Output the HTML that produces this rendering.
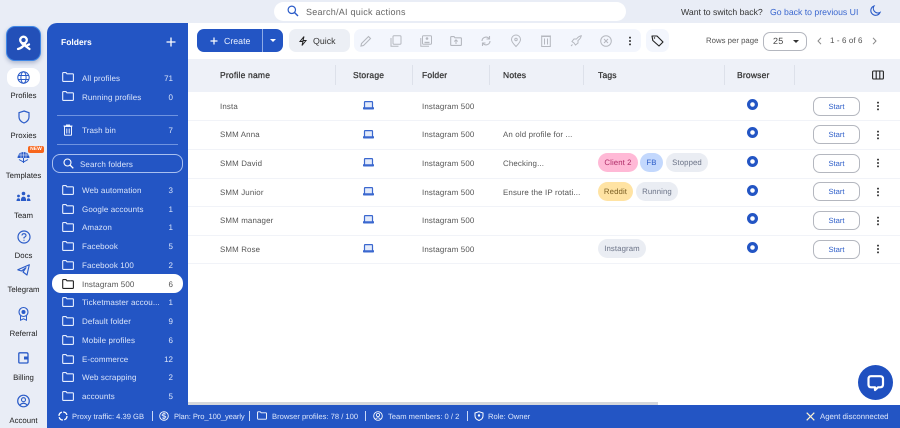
<!DOCTYPE html>
<html><head><meta charset="utf-8"><style>
*{box-sizing:border-box}
html,body{margin:0;padding:0}
body{width:900px;height:428px;overflow:hidden;background:#e9edf6;font-family:"Liberation Sans",sans-serif;position:relative;font-size:8px;color:#444;text-rendering:geometricPrecision;filter:blur(.25px)}
.a{position:absolute;white-space:nowrap}
svg{position:absolute;overflow:visible;fill:none}
.nl{position:absolute;left:0;width:47px;text-align:center;font-size:7.8px;color:#222;line-height:10px;margin-top:1px}
.f{position:absolute;left:82px;color:#dbe5fa;font-size:8px;line-height:10px;letter-spacing:.1px;white-space:nowrap;margin-top:1px}
.c{position:absolute;right:727px;color:#dbe5fa;font-size:8px;line-height:10px;margin-top:1px}
.hd{position:absolute;top:69px;font-size:8.5px;line-height:12px;color:#333;letter-spacing:.2px;-webkit-text-stroke:.25px #333}
.dv{position:absolute;top:65px;width:1px;height:20px;background:#dde1ea}
.rl{position:absolute;left:188px;right:0;height:1px;background:#f1f3f8}
.t{position:absolute;font-size:7.9px;line-height:10px;color:#555;letter-spacing:.15px;white-space:nowrap}
.st{position:absolute;left:813px;width:47px;height:19px;border:1px solid #b4b7bf;border-radius:7px;background:#fff;color:#2f5fc9;font-size:7.6px;line-height:18px;text-align:center}
.tag{position:absolute;height:19px;border-radius:10px;font-size:7.8px;line-height:19px;text-align:center;letter-spacing:.1px}
.dots{position:absolute;left:877px;width:2px;height:2px;background:#333;box-shadow:0 -3.4px 0 #333,0 3.4px 0 #333;border-radius:1px}
.sb{position:absolute;top:411px;color:#dce6fb;font-size:7.6px;line-height:11px;white-space:nowrap}
.sp{position:absolute;top:411px;width:1px;height:10px;background:#c9d8f7}
</style></head><body>
<svg width="0" height="0" style="position:absolute"><defs>
<symbol id="fo" viewBox="0 0 12 10"><path d="M.7 2V1.200Q.7.600 1.300.600H4L5 1.800H10.700Q11.400 1.800 11.400 2.500V8.600Q11.400 9.400 10.600 9.400H1.400Q.7 9.400.7 8.600Z" fill="none" stroke="currentColor" stroke-width="1.100"/></symbol>
<symbol id="lap" viewBox="0 0 11 9"><path d="M1.500 6.500V1.200Q1.500.600 2.100.600H8.900Q9.500.600 9.500 1.200V6.500" fill="#e4ebfa" stroke="#3b68cf" stroke-width="1.200"/><path d="M0 6.300H11V7.600Q11 8.500 10.300 8.500H.7Q0 8.500 0 7.600Z" fill="#3b68cf"/></symbol>
<symbol id="chr" viewBox="0 0 11 11"><circle cx="5.500" cy="5.500" r="3.900" fill="none" stroke="#2355c4" stroke-width="3.200"/></symbol>
</defs></svg>

<!-- top -->
<div class="a" style="left:274px;top:2px;width:352px;height:19px;background:#fff;border-radius:10px"></div>
<svg style="left:287px;top:5px" width="12" height="12" viewBox="0 0 12 12"><circle cx="4.800" cy="4.800" r="3.700" stroke="#2a5bc8" stroke-width="1.200"/><path d="M7.500 7.500L11 11" stroke="#2a5bc8" stroke-width="1.400"/></svg>
<div class="a" style="left:306px;top:7px;font-size:9px;line-height:11px;color:#666;letter-spacing:.25px">Search/AI quick actions</div>
<div class="a" style="left:681px;top:6px;font-size:8.700px;line-height:12px;color:#333">Want to switch back?</div>
<div class="a" style="left:770px;top:6px;font-size:8.700px;line-height:12px;color:#3a67cf">Go back to previous UI</div>
<svg style="left:869px;top:5px" width="12" height="12" viewBox="0 0 12 12"><path d="M5 1A4.800 4.800 0 1 0 11 7.500 4.600 4.600 0 0 1 5 1Z" stroke="#2a5bc8" stroke-width="1.100"/></svg>

<!-- nav -->
<div class="a" style="left:6px;top:26px;width:35px;height:35px;border-radius:9px;background:#2350b8;border:1px solid #3f87e6;box-shadow:0 2px 4px rgba(30,50,110,.3)"></div>
<svg style="left:15px;top:34px" width="18" height="18" viewBox="0 0 18 18"><circle cx="8.500" cy="6" r="3.300" stroke="#fff" stroke-width="2.300"/><path d="M7 9.500L14.500 15M10 10Q7 14 3 15M11 12L14 10.500" stroke="#fff" stroke-width="2.300" stroke-linecap="round"/></svg>
<div class="a" style="left:7px;top:68px;width:33px;height:19px;background:#fff;border-radius:8px"></div>
<svg style="left:17px;top:71px" width="13" height="13" viewBox="0 0 13 13"><g stroke="#2a5bc8" stroke-width="1"><circle cx="6.500" cy="6.500" r="5.700"/><ellipse cx="6.500" cy="6.500" rx="2.600" ry="5.700"/><path d="M1 4.500H12M1 8.500H12"/></g></svg>
<div class="nl" style="top:90px">Profiles</div>
<svg style="left:18px;top:110px" width="12" height="14" viewBox="0 0 12 14"><path d="M6 1L11 2.700V7Q11 11 6 13 1 11 1 7V2.700Z" stroke="#2a5bc8" stroke-width="1.200"/></svg>
<div class="nl" style="top:130px">Proxies</div>
<svg style="left:17px;top:151px" width="13" height="13" viewBox="0 0 13 13"><path d="M.5 7Q1 1.200 6.500 1 12 1.200 12.500 7Z" fill="#2a5bc8"/><path d="M4 1.500V7M9 1.500V7M6.500 1V7M1 4H12" stroke="#fff" stroke-width=".5"/><path d="M2 8.500L6.500 11 11 8.500M6.500 7V12" stroke="#2a5bc8"/></svg>
<div class="a" style="left:28px;top:146px;width:16px;height:7px;background:#f7661d;border-radius:2px;color:#fff;font-size:5px;line-height:7px;font-weight:700;text-align:center">NEW</div>
<div class="nl" style="top:170px">Templates</div>
<svg style="left:16px;top:191px" width="15" height="12" viewBox="0 0 15 12"><g fill="#2a5bc8"><circle cx="7.500" cy="2.500" r="1.800"/><circle cx="2.500" cy="5" r="1.400"/><circle cx="12.500" cy="5" r="1.400"/><path d="M4.800 10Q4.800 5.600 7.500 5.600T10.200 10ZM.5 10Q.5 7.200 2.500 7.200T4 10ZM11 10Q10.500 7.200 12.500 7.200T14.500 10Z"/></g></svg>
<div class="nl" style="top:210px">Team</div>
<svg style="left:17px;top:230px" width="14" height="14" viewBox="0 0 14 14"><circle cx="7" cy="7" r="6" stroke="#2a5bc8" stroke-width="1.200"/><path d="M5 5.500Q5 3.700 7 3.700T9 5.500Q9 6.500 7 7.500V8.500M7 9.700V10.700" stroke="#2a5bc8" stroke-width="1.100"/></svg>
<div class="nl" style="top:250px">Docs</div>
<svg style="left:17px;top:264px" width="13" height="12" viewBox="0 0 13 12"><path d="M12.300 .7L.8 5.800 4.500 7 9 3.700 6 8 10 11Z" stroke="#2a5bc8" stroke-width="1.100" stroke-linejoin="round"/></svg>
<div class="nl" style="top:284px">Telegram</div>
<svg style="left:18px;top:307px" width="11" height="14" viewBox="0 0 11 14"><circle cx="5.500" cy="5" r="4.500" stroke="#2a5bc8" stroke-width="1.100"/><circle cx="5.500" cy="5" r="2" fill="#2a5bc8"/><path d="M2.500 9V13.200L5.500 11.800 8.500 13.200V9" stroke="#2a5bc8"/></svg>
<div class="nl" style="top:328px">Referral</div>
<svg style="left:18px;top:352px" width="11" height="12" viewBox="0 0 11 12"><path d="M1.800.8H8.500Q10 .8 10 2.300V10Q10 11 9 11H1.800Q.8 11 .8 10V1.800Q.8.800 1.800.800Z" stroke="#2a5bc8" stroke-width="1.300"/><rect x="6" y="4.500" width="4" height="3" fill="#2a5bc8"/></svg>
<div class="nl" style="top:372px">Billing</div>
<svg style="left:17px;top:394px" width="13" height="14" viewBox="0 0 13 14"><circle cx="6.500" cy="7" r="5.800" stroke="#2a5bc8" stroke-width="1.200"/><circle cx="6.500" cy="5.700" r="2" stroke="#2a5bc8" stroke-width="1.100"/><path d="M2.800 11Q6.500 7.500 10.200 11" stroke="#2a5bc8" stroke-width="1.100"/></svg>
<div class="nl" style="top:415px">Account</div>

<!-- folder panel -->
<div class="a" style="left:47px;top:23px;width:853px;height:405px;background:#2355c4;border-radius:10px 0 0 0"></div>
<div class="a" style="left:188px;top:23px;width:712px;height:382px;background:#fff"></div>
<div class="a" style="left:61px;top:37px;color:#fff;font-size:8.500px;line-height:11px;font-weight:700">Folders</div>
<svg style="left:166px;top:37px" width="10" height="10" viewBox="0 0 10 10"><path d="M5 .5V9.500M.5 5H9.500" stroke="#fff" stroke-width="1.300"/></svg>

<svg style="left:62px;top:72px;color:#e6eeff" width="12" height="10"><use href="#fo"/></svg><div class="f" style="top:73px">All profiles</div><div class="c" style="top:73px">71</div>
<svg style="left:62px;top:91px;color:#e6eeff" width="12" height="10"><use href="#fo"/></svg><div class="f" style="top:92px">Running profiles</div><div class="c" style="top:92px">0</div>
<div class="a" style="left:57px;top:115px;width:121px;height:1px;background:#6f93e0"></div>
<svg style="left:63px;top:124px" width="10" height="12" viewBox="0 0 10 12"><path d="M1.500 2.500V10.500Q1.500 11.300 2.300 11.300H7.700Q8.500 11.300 8.500 10.500V2.500ZM.5 2H9.500M3 1H7M3.800 4.500V9.500M6.200 4.500V9.500" stroke="#eef3ff" stroke-width="1"/></svg>
<div class="f" style="top:125px">Trash bin</div><div class="c" style="top:125px">7</div>
<div class="a" style="left:57px;top:144px;width:121px;height:1px;background:#6f93e0"></div>
<div class="a" style="left:52px;top:154px;width:131px;height:19px;border:1px solid #a9c0f0;border-radius:8px"></div>
<svg style="left:63px;top:158px" width="11" height="11" viewBox="0 0 11 11"><circle cx="4.500" cy="4.500" r="3.500" stroke="#fff" stroke-width="1.100"/><path d="M7 7L10.300 10.300" stroke="#fff" stroke-width="1.300"/></svg>
<div class="f" style="left:80px;top:159px">Search folders</div>

<svg style="left:62px;top:185px;color:#e6eeff" width="12" height="10"><use href="#fo"/></svg><div class="f" style="top:185px">Web automation</div><div class="c" style="top:185px">3</div>
<svg style="left:62px;top:204px;color:#e6eeff" width="12" height="10"><use href="#fo"/></svg><div class="f" style="top:204px">Google accounts</div><div class="c" style="top:204px">1</div>
<svg style="left:62px;top:222px;color:#e6eeff" width="12" height="10"><use href="#fo"/></svg><div class="f" style="top:222px">Amazon</div><div class="c" style="top:222px">1</div>
<svg style="left:62px;top:241px;color:#e6eeff" width="12" height="10"><use href="#fo"/></svg><div class="f" style="top:241px">Facebook</div><div class="c" style="top:241px">5</div>
<svg style="left:62px;top:260px;color:#e6eeff" width="12" height="10"><use href="#fo"/></svg><div class="f" style="top:260px">Facebook 100</div><div class="c" style="top:260px">2</div>
<div class="a" style="left:52px;top:274px;width:131px;height:19px;background:#fff;border-radius:9px"></div>
<svg style="left:62px;top:279px;color:#222" width="12" height="10"><use href="#fo"/></svg><div class="f" style="top:279px;color:#555">Instagram 500</div><div class="c" style="top:279px;color:#555">6</div>
<svg style="left:62px;top:297px;color:#e6eeff" width="12" height="10"><use href="#fo"/></svg><div class="f" style="top:297px">Ticketmaster accou...</div><div class="c" style="top:297px">1</div>
<svg style="left:62px;top:316px;color:#e6eeff" width="12" height="10"><use href="#fo"/></svg><div class="f" style="top:316px">Default folder</div><div class="c" style="top:316px">9</div>
<svg style="left:62px;top:335px;color:#e6eeff" width="12" height="10"><use href="#fo"/></svg><div class="f" style="top:335px">Mobile profiles</div><div class="c" style="top:335px">6</div>
<svg style="left:62px;top:354px;color:#e6eeff" width="12" height="10"><use href="#fo"/></svg><div class="f" style="top:354px">E-commerce</div><div class="c" style="top:354px">12</div>
<svg style="left:62px;top:372px;color:#e6eeff" width="12" height="10"><use href="#fo"/></svg><div class="f" style="top:372px">Web scrapping</div><div class="c" style="top:372px">2</div>
<svg style="left:62px;top:391px;color:#e6eeff" width="12" height="10"><use href="#fo"/></svg><div class="f" style="top:391px">accounts</div><div class="c" style="top:391px">5</div>

<!-- toolbar -->
<div class="a" style="left:197px;top:29px;width:86px;height:23px;background:#2355c4;border-radius:7px"></div>
<div class="a" style="left:262px;top:29px;width:1px;height:23px;background:#8fabe6"></div>
<svg style="left:210px;top:37px" width="8" height="8" viewBox="0 0 8 8"><path d="M4 .5V7.500M.5 4H7.500" stroke="#fff" stroke-width="1.200"/></svg>
<div class="a" style="left:224px;top:36px;color:#eaf0ff;font-size:8.800px;line-height:11px">Create</div>
<svg style="left:270px;top:39px" width="6" height="3" viewBox="0 0 6 3"><path d="M0 0H6L3 3Z" fill="#fff"/></svg>
<div class="a" style="left:289px;top:29px;width:61px;height:23px;background:#eceff5;border-radius:7px"></div>
<svg style="left:299px;top:36px" width="8" height="10" viewBox="0 0 8 10"><path d="M5 .5L1 5.500H4L3 9.500 7 4.500H4Z" stroke="#222"/></svg>
<div class="a" style="left:313px;top:36px;color:#333;font-size:8.800px;line-height:11px">Quick</div>
<div class="a" style="left:354px;top:29px;width:287px;height:23px;background:#f3f6fd;border-radius:7px"></div>
<svg style="left:360px;top:35px" width="12" height="12" viewBox="0 0 12 12"><path d="M1 11L1.500 8.500 8.500 1.500 10.500 3.500 3.500 10.500Z" stroke="#b5b8bf" stroke-width="1.100"/></svg>
<svg style="left:390px;top:35px" width="12" height="12" viewBox="0 0 12 12"><rect x="3" y=".7" width="8" height="8.500" rx="1" stroke="#b5b8bf"/><path d="M1 3V11.300H8.500" stroke="#b5b8bf"/></svg>
<svg style="left:420px;top:35px" width="12" height="12" viewBox="0 0 12 12"><rect x="2.500" y=".7" width="9" height="8.500" rx="1" stroke="#b5b8bf"/><path d="M.8 3V11.300H9" stroke="#b5b8bf"/><circle cx="7" cy="3.500" r="1.300" fill="#b5b8bf"/><path d="M4.500 7.500H9.500" stroke="#b5b8bf" stroke-width="1.400"/></svg>
<svg style="left:450px;top:36px;color:#b5b8bf" width="12" height="10"><use href="#fo"/><path d="M6 8V4M4.300 5.500L6 3.800 7.700 5.500" stroke="#b5b8bf"/></svg>
<svg style="left:480px;top:35px" width="12" height="12" viewBox="0 0 12 12"><path d="M2 6A4 4 0 0 1 9 3.500M10 6A4 4 0 0 1 3 8.500M9.500 1V4H6.500M2.500 11V8H5.500" stroke="#b5b8bf" stroke-width="1.100"/></svg>
<svg style="left:511px;top:35px" width="10" height="12" viewBox="0 0 10 12"><path d="M5 11.500Q.5 7 .5 4.500A4.500 4.500 0 0 1 9.500 4.500Q9.500 7 5 11.500Z" stroke="#b5b8bf"/><circle cx="5" cy="4.500" r="1.200" stroke="#b5b8bf"/></svg>
<svg style="left:541px;top:35px" width="10" height="12" viewBox="0 0 10 12"><rect x=".7" y="1.500" width="8.600" height="10" stroke="#b5b8bf"/><path d="M0 1H10M3.500 3.500V9.500M6.500 3.500V9.500" stroke="#b5b8bf"/></svg>
<svg style="left:570px;top:35px" width="12" height="12" viewBox="0 0 12 12"><path d="M4 8L2 6.500 4 4H6.500Q8.500 1.200 11.300.7 10.800 3.500 8 5.500V8L5.500 10ZM2.500 9.500L1 11" stroke="#b5b8bf"/></svg>
<svg style="left:600px;top:35px" width="12" height="12" viewBox="0 0 12 12"><circle cx="6" cy="6" r="5.300" stroke="#b5b8bf"/><path d="M4 4L8 8M8 4L4 8" stroke="#b5b8bf"/></svg>
<div class="dots" style="left:629px;top:40px"></div>
<div class="a" style="left:646px;top:29px;width:23px;height:23px;background:#f3f6fd;border-radius:7px"></div>
<svg style="left:651px;top:35px" width="13" height="12" viewBox="0 0 13 12"><path d="M1 1H6L12 7 8 11 1.800 5.500Z" stroke="#222" stroke-width="1.100" stroke-linejoin="round"/><circle cx="3.500" cy="3" r=".7" fill="#222"/></svg>
<div class="a" style="left:706px;top:36px;font-size:7.800px;line-height:10px;color:#555">Rows per page</div>
<div class="a" style="left:763px;top:32px;width:44px;height:19px;border:1px solid #b4b7bf;border-radius:7px"></div>
<div class="a" style="left:773px;top:35px;font-size:9px;line-height:12px;color:#444;letter-spacing:.3px">25</div>
<svg style="left:793px;top:40px" width="6" height="3" viewBox="0 0 6 3"><path d="M0 0H6L3 3Z" fill="#333"/></svg>
<svg style="left:817px;top:37px" width="5" height="8" viewBox="0 0 5 8"><path d="M4 .8L1 4 4 7.200" stroke="#888"/></svg>
<div class="a" style="left:830px;top:36px;font-size:8px;line-height:10px;color:#555;letter-spacing:.1px">1 - 6 of 6</div>
<svg style="left:872px;top:37px" width="5" height="8" viewBox="0 0 5 8"><path d="M1 .8L4 4 1 7.200" stroke="#888"/></svg>

<!-- table head -->
<div class="a" style="left:188px;top:59px;width:712px;height:33px;background:#eef1f8"></div>
<div class="hd" style="left:220px">Profile name</div>
<div class="hd" style="left:353px">Storage</div>
<div class="hd" style="left:422px">Folder</div>
<div class="hd" style="left:503px">Notes</div>
<div class="hd" style="left:598px">Tags</div>
<div class="hd" style="left:737px">Browser</div>
<div class="dv" style="left:335px"></div><div class="dv" style="left:412px"></div><div class="dv" style="left:489px"></div><div class="dv" style="left:583px"></div><div class="dv" style="left:724px"></div><div class="dv" style="left:794px"></div>
<svg style="left:872px;top:70px" width="12" height="10" viewBox="0 0 12 10"><rect x=".6" y="1" width="10.800" height="8" rx="1" stroke="#222" stroke-width="1.100"/><path d="M4.200 1V9M7.800 1V9" stroke="#222" stroke-width="1.100"/></svg>

<!-- rows -->
<div class="rl" style="top:120px"></div><div class="rl" style="top:149px"></div><div class="rl" style="top:178px"></div><div class="rl" style="top:206px"></div><div class="rl" style="top:235px"></div><div class="rl" style="top:263px"></div>

<div class="t" style="left:220px;top:102px">Insta</div><svg style="left:363px;top:101px" width="11" height="9"><use href="#lap"/></svg><div class="t" style="left:422px;top:102px">Instagram 500</div><svg style="left:747px;top:99px" width="11" height="11"><use href="#chr"/></svg><div class="st" style="top:97px">Start</div><div class="dots" style="top:105px"></div>

<div class="t" style="left:220px;top:130px">SMM Anna</div><svg style="left:363px;top:130px" width="11" height="9"><use href="#lap"/></svg><div class="t" style="left:422px;top:130px">Instagram 500</div><div class="t" style="left:503px;top:130px">An old profile for ...</div><svg style="left:747px;top:127px" width="11" height="11"><use href="#chr"/></svg><div class="st" style="top:125px">Start</div><div class="dots" style="top:134px"></div>

<div class="t" style="left:220px;top:159px">SMM David</div><svg style="left:363px;top:158px" width="11" height="9"><use href="#lap"/></svg><div class="t" style="left:422px;top:159px">Instagram 500</div><div class="t" style="left:503px;top:159px">Checking...</div>
<div class="tag" style="left:598px;top:153px;width:40px;background:#ffb9d6;color:#b02c68">Client 2</div><div class="tag" style="left:640px;top:153px;width:23px;background:#c3d8fd;color:#2f5fc9">FB</div><div class="tag" style="left:666px;top:153px;width:42px;background:#eaedf3;color:#6c7488">Stopped</div>
<svg style="left:747px;top:156px" width="11" height="11"><use href="#chr"/></svg><div class="st" style="top:154px">Start</div><div class="dots" style="top:162px"></div>

<div class="t" style="left:220px;top:188px">SMM Junior</div><svg style="left:363px;top:187px" width="11" height="9"><use href="#lap"/></svg><div class="t" style="left:422px;top:188px">Instagram 500</div><div class="t" style="left:503px;top:188px">Ensure the IP rotati...</div>
<div class="tag" style="left:598px;top:182px;width:35px;background:#ffe3a3;color:#7d6125">Reddit</div><div class="tag" style="left:636px;top:182px;width:42px;background:#eaedf3;color:#6c7488">Running</div>
<svg style="left:747px;top:185px" width="11" height="11"><use href="#chr"/></svg><div class="st" style="top:182px">Start</div><div class="dots" style="top:191px"></div>

<div class="t" style="left:220px;top:216px">SMM manager</div><svg style="left:363px;top:215px" width="11" height="9"><use href="#lap"/></svg><div class="t" style="left:422px;top:216px">Instagram 500</div><svg style="left:747px;top:213px" width="11" height="11"><use href="#chr"/></svg><div class="st" style="top:211px">Start</div><div class="dots" style="top:220px"></div>

<div class="t" style="left:220px;top:245px">SMM Rose</div><svg style="left:363px;top:244px" width="11" height="9"><use href="#lap"/></svg><div class="t" style="left:422px;top:245px">Instagram 500</div>
<div class="tag" style="left:598px;top:239px;width:48px;background:#eaedf3;color:#6c7488">Instagram</div>
<svg style="left:747px;top:242px" width="11" height="11"><use href="#chr"/></svg><div class="st" style="top:240px">Start</div><div class="dots" style="top:248px"></div>

<!-- scrollbar -->
<div class="a" style="left:188px;top:402px;width:470px;height:3px;background:#d5d7db"></div>

<!-- chat -->
<div class="a" style="left:858px;top:365px;width:35px;height:35px;border-radius:50%;background:#1f50c0"></div>
<svg style="left:867px;top:375px" width="18" height="17" viewBox="0 0 18 17"><path d="M4 1.200H13Q16 1.200 16 4V9.500Q16 12.300 13 12.300H11L8 15V12.300H4Q1.500 12.300 1.500 9.500V4Q1.500 1.200 4 1.200Z" stroke="#fff" stroke-width="2.200" stroke-linejoin="round"/></svg>

<!-- status -->
<svg style="left:58px;top:411px" width="10" height="10" viewBox="0 0 10 10"><circle cx="5" cy="5" r="4" stroke="#fff" stroke-width="1.300" stroke-dasharray="5 1.300"/></svg>
<div class="sb" style="left:72px">Proxy traffic: 4.39 GB</div><div class="sp" style="left:152px"></div>
<svg style="left:159px;top:411px" width="10" height="10" viewBox="0 0 10 10"><circle cx="5" cy="5" r="4.300" stroke="#fff" stroke-width=".9"/><path d="M6.800 3.300Q5 2 3.500 3.300T5 5 6.500 6.800 3.200 6.700M5 1.500V8.500" stroke="#fff" stroke-width=".7"/></svg>
<div class="sb" style="left:174px;letter-spacing:-.1px">Plan: Pro_100_yearly</div><div class="sp" style="left:249px"></div>
<svg style="left:257px;top:411px;color:#fff" width="10" height="9"><use href="#fo"/></svg>
<div class="sb" style="left:272px">Browser profiles: 78 / 100</div><div class="sp" style="left:365px"></div>
<svg style="left:373px;top:411px" width="10" height="10" viewBox="0 0 10 10"><circle cx="5" cy="5" r="4.300" stroke="#fff" stroke-width=".9"/><circle cx="5" cy="4" r="1.600" stroke="#fff" stroke-width=".8"/><path d="M2.500 8Q5 5.500 7.500 8" stroke="#fff" stroke-width=".8"/></svg>
<div class="sb" style="left:388px">Team members: 0 / 2</div><div class="sp" style="left:467px"></div>
<svg style="left:474px;top:411px" width="10" height="10" viewBox="0 0 10 10"><path d="M5 .7L9 2V5Q9 8 5 9.500 1 8 1 5V2Z" stroke="#fff"/><circle cx="5" cy="4.500" r="1.200" fill="#fff"/></svg>
<div class="sb" style="left:488px">Role: Owner</div>
<svg style="left:806px;top:412px" width="9" height="9" viewBox="0 0 9 9"><path d="M.7.700L8.300 8.300M8.300.700L.7 8.300" stroke="#fff3d0" stroke-width="1.200"/></svg>
<div class="sb" style="left:820px;font-size:7.800px">Agent disconnected</div>
</body></html>
